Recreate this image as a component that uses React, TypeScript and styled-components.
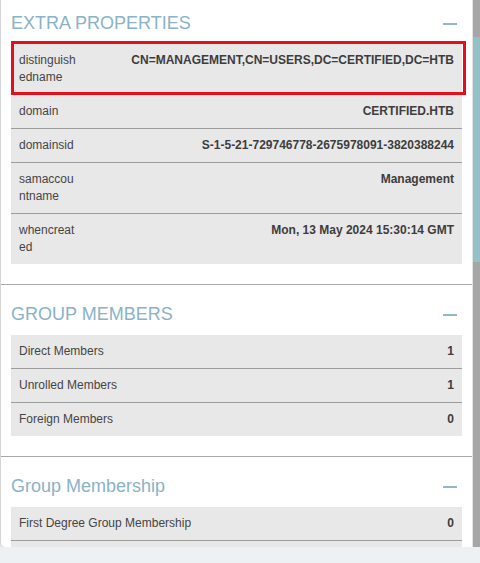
import React from 'react';
import styled, { createGlobalStyle } from 'styled-components';

type Prop = { label: string; value: string; marked?: boolean };

const extraProps: Prop[] = [
  { label: 'distinguishedname', value: 'CN=MANAGEMENT,CN=USERS,DC=CERTIFIED,DC=HTB', marked: true },
  { label: 'domain', value: 'CERTIFIED.HTB' },
  { label: 'domainsid', value: 'S-1-5-21-729746778-2675978091-3820388244' },
  { label: 'samaccountname', value: 'Management' },
  { label: 'whencreated', value: 'Mon, 13 May 2024 15:30:14 GMT' },
];

const members: Prop[] = [
  { label: 'Direct Members', value: '1' },
  { label: 'Unrolled Members', value: '1' },
  { label: 'Foreign Members', value: '0' },
];

const membership: Prop[] = [
  { label: 'First Degree Group Membership', value: '0' },
  { label: 'Unrolled Group Membership', value: '0' },
];

const GlobalStyle = createGlobalStyle`
  html, body {
    margin: 0;
    padding: 0;
    background: #eef1f4;
    font-family: "Liberation Sans", Arial, sans-serif;
  }
`;

const Panel = styled.div`
  display: flex;
  height: 547px;
  background: #fff;
  border-left: 1px solid #d4d4d4;
  border-radius: 0 0 0 5px;
  box-shadow: 0 3px 8px rgba(40, 50, 70, 0.12);
  overflow: hidden;
`;

const Content = styled.div`
  flex: 1;
  min-width: 0;
  overflow: hidden;
  border-right: 1px solid #e2e2e2;
`;

// content is scrolled down a little
const Stack = styled.div`
  margin-top: -6px;
`;

const ScrollTrack = styled.div`
  width: 7px;
  flex-shrink: 0;
  background: #a6a6a6;
  display: flex;
  flex-direction: column;
`;

const ScrollThumb = styled.div`
  margin-top: 37px;
  height: 225px;
  background: #93c1c8;
`;

const Section = styled.section`
  padding: 18px 10px 20px;
  border-bottom: 1px solid #a9a9a9;
`;

const Header = styled.div`
  display: flex;
  align-items: center;
  justify-content: space-between;
  height: 22px;
  margin-bottom: 10px;
`;

const Title = styled.h3`
  margin: 0;
  font-size: 18px;
  line-height: 22px;
  font-weight: 400;
  color: #89b3c6;
`;

const Collapse = styled.span`
  width: 14px;
  height: 2px;
  margin: 2px 5px 0 0;
  background: #8fb9c9;
`;

const Table = styled.div`
  background: #e8e8e8;
`;

const Row = styled.div<{ $narrow?: boolean }>`
  position: relative;
  display: grid;
  grid-template-columns: ${({ $narrow }) => ($narrow ? '60px 1fr' : '1fr auto')};
  padding: 8px;
  font-size: 12px;
  line-height: 17px;
  color: #454545;
  border-bottom: 1px solid #9c9c9c;
  &:last-child {
    border-bottom: none;
  }
`;

const Marker = styled.span`
  position: absolute;
  top: -3px;
  left: 0;
  right: -4px;
  bottom: -1px;
  border: 3px solid #e3101b;
  pointer-events: none;
`;

const Label = styled.span`
  word-break: break-all;
`;

const Value = styled.span`
  font-weight: 700;
  text-align: right;
  white-space: nowrap;
  color: #3d3d3d;
`;

function PropTable({ rows, narrow }: { rows: Prop[]; narrow?: boolean }) {
  return (
    <Table>
      {rows.map((r) => (
        <Row key={r.label} $narrow={narrow}>
          <Label>{r.label}</Label>
          <Value>{r.value}</Value>
          {r.marked && <Marker />}
        </Row>
      ))}
    </Table>
  );
}

function Block({ title, rows, narrow }: { title: string; rows: Prop[]; narrow?: boolean }) {
  return (
    <Section>
      <Header>
        <Title>{title}</Title>
        <Collapse />
      </Header>
      <PropTable rows={rows} narrow={narrow} />
    </Section>
  );
}

export default function App() {
  return (
    <>
      <GlobalStyle />
      <Panel>
        <Content>
          <Stack>
            <Block title="EXTRA PROPERTIES" rows={extraProps} narrow />
            <Block title="GROUP MEMBERS" rows={members} />
            <Block title="Group Membership" rows={membership} />
          </Stack>
        </Content>
        <ScrollTrack>
          <ScrollThumb />
        </ScrollTrack>
      </Panel>
    </>
  );
}
